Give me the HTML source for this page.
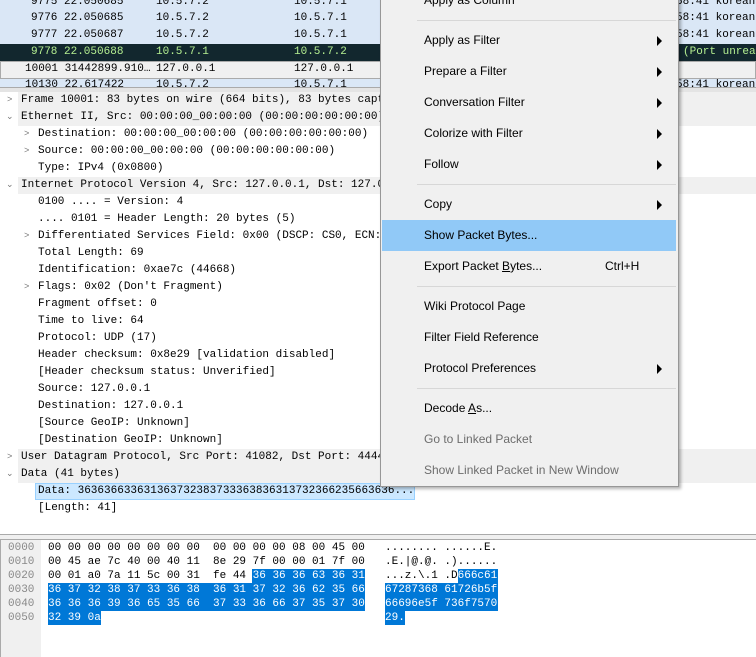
<!DOCTYPE html>
<html><head><meta charset="utf-8"><style>
*{margin:0;padding:0;box-sizing:border-box}
body{width:756px;height:657px;overflow:hidden;background:#fff;position:relative;font-family:"Liberation Mono",monospace;font-size:11px;color:#000}
.a{position:absolute;white-space:pre;line-height:17px}
.row{position:absolute;left:0;width:756px;height:17px}
.m{position:absolute;font-family:"Liberation Sans",sans-serif;font-size:12px;color:#000;left:43px;white-space:pre}
.arr{position:absolute;left:276px;width:0;height:0;border-top:5px solid transparent;border-bottom:5px solid transparent;border-left:5px solid #000}
.sep{position:absolute;left:36px;right:2px;height:1px;background:#d7d7d7}
.h{position:absolute;white-space:pre;line-height:14px;font-size:11px}
.tw{position:absolute;font-size:9px;color:#777;line-height:17px}
</style></head><body>
<!-- packet list -->
<div class="row" style="top:-6px;background:#dae7f6"></div>
<div class="row" style="top:10px;background:#dae7f6"></div>
<div class="row" style="top:27px;background:#dae7f6"></div>
<div class="row" style="top:44px;background:#12272e"></div>
<div class="row" style="top:61px;height:18px;background:#f0f0f0;border:1px solid #aaa"></div>
<div class="row" style="top:79px;height:8px;background:#dae7f6"></div>
<div class="row" style="top:87px;height:5px;background:#e4e4e4;border-top:1px solid #aaa"></div>
<div class="a" style="top:-6px;left:31px">9775 22.050685</div><div class="a" style="top:-6px;left:156px">10.5.7.2</div><div class="a" style="top:-6px;left:294px">10.5.7.1</div><div class="a" style="top:-6px;left:676px">58:41 korean</div>
<div class="a" style="top:10px;left:31px">9776 22.050685</div><div class="a" style="top:10px;left:156px">10.5.7.2</div><div class="a" style="top:10px;left:294px">10.5.7.1</div><div class="a" style="top:10px;left:676px">58:41 korean</div>
<div class="a" style="top:27px;left:31px">9777 22.050687</div><div class="a" style="top:27px;left:156px">10.5.7.2</div><div class="a" style="top:27px;left:294px">10.5.7.1</div><div class="a" style="top:27px;left:676px">58:41 korean</div>
<div class="a" style="top:44px;left:31px;color:#b5ef91">9778 22.050688</div><div class="a" style="top:44px;left:156px;color:#b5ef91">10.5.7.1</div><div class="a" style="top:44px;left:294px;color:#b5ef91">10.5.7.2</div><div class="a" style="top:44px;left:683px;color:#b5ef91">(Port unrea</div>
<div class="a" style="top:61px;left:25px">10001 31442899.910…</div><div class="a" style="top:61px;left:156px">127.0.0.1</div><div class="a" style="top:61px;left:294px">127.0.0.1</div>
<div style="position:absolute;top:79px;left:0;width:756px;height:8px;overflow:hidden"><div class="a" style="top:-2px;left:25px">10130 22.617422</div><div class="a" style="top:-2px;left:156px">10.5.7.2</div><div class="a" style="top:-2px;left:294px">10.5.7.1</div><div class="a" style="top:-2px;left:676px">58:41 korean</div></div>
<!-- tree -->
<div class="row" style="top:92px;background:#f0f0f0;left:18px"></div>
<div class="row" style="top:109px;background:#f0f0f0;left:18px"></div>
<div class="row" style="top:177px;background:#f0f0f0;left:18px"></div>
<div class="row" style="top:449px;background:#f0f0f0;left:18px"></div>
<div class="row" style="top:466px;background:#f0f0f0;left:18px"></div>
<div style="position:absolute;top:483px;left:35px;width:380px;height:17px;background:#cce8ff;border:1px solid #99d1ff"></div>
<div class="tw" style="top:92px;left:7px">&gt;</div>
<div class="tw" style="top:109px;left:6px">⌄</div>
<div class="tw" style="top:126px;left:24px">&gt;</div>
<div class="tw" style="top:143px;left:24px">&gt;</div>
<div class="tw" style="top:177px;left:6px">⌄</div>
<div class="tw" style="top:228px;left:24px">&gt;</div>
<div class="tw" style="top:279px;left:24px">&gt;</div>
<div class="tw" style="top:449px;left:7px">&gt;</div>
<div class="tw" style="top:466px;left:6px">⌄</div>
<div class="a" style="top:92px;left:21px">Frame 10001: 83 bytes on wire (664 bits), 83 bytes capt</div>
<div class="a" style="top:109px;left:21px">Ethernet II, Src: 00:00:00_00:00:00 (00:00:00:00:00:00)</div>
<div class="a" style="top:126px;left:38px">Destination: 00:00:00_00:00:00 (00:00:00:00:00:00)</div>
<div class="a" style="top:143px;left:38px">Source: 00:00:00_00:00:00 (00:00:00:00:00:00)</div>
<div class="a" style="top:160px;left:38px">Type: IPv4 (0x0800)</div>
<div class="a" style="top:177px;left:21px">Internet Protocol Version 4, Src: 127.0.0.1, Dst: 127.0</div>
<div class="a" style="top:194px;left:38px">0100 .... = Version: 4</div>
<div class="a" style="top:211px;left:38px">.... 0101 = Header Length: 20 bytes (5)</div>
<div class="a" style="top:228px;left:38px">Differentiated Services Field: 0x00 (DSCP: CS0, ECN:</div>
<div class="a" style="top:245px;left:38px">Total Length: 69</div>
<div class="a" style="top:262px;left:38px">Identification: 0xae7c (44668)</div>
<div class="a" style="top:279px;left:38px">Flags: 0x02 (Don't Fragment)</div>
<div class="a" style="top:296px;left:38px">Fragment offset: 0</div>
<div class="a" style="top:313px;left:38px">Time to live: 64</div>
<div class="a" style="top:330px;left:38px">Protocol: UDP (17)</div>
<div class="a" style="top:347px;left:38px">Header checksum: 0x8e29 [validation disabled]</div>
<div class="a" style="top:364px;left:38px">[Header checksum status: Unverified]</div>
<div class="a" style="top:381px;left:38px">Source: 127.0.0.1</div>
<div class="a" style="top:398px;left:38px">Destination: 127.0.0.1</div>
<div class="a" style="top:415px;left:38px">[Source GeoIP: Unknown]</div>
<div class="a" style="top:432px;left:38px">[Destination GeoIP: Unknown]</div>
<div class="a" style="top:449px;left:21px">User Datagram Protocol, Src Port: 41082, Dst Port: 4444</div>
<div class="a" style="top:466px;left:21px">Data (41 bytes)</div>
<div class="a" style="top:483px;left:38px">Data: 363636633631363732383733363836313732366235663636...</div>
<div class="a" style="top:500px;left:38px">[Length: 41]</div>
<!-- splitter -->
<div style="position:absolute;top:534px;left:0;width:756px;height:6px;background:#f0f0f0;border-top:1px solid #aaa;border-bottom:1px solid #aaa"></div>
<!-- hex -->
<div style="position:absolute;top:540px;left:0;width:41px;height:117px;background:#f0f0f0"></div>
<div style="position:absolute;top:540px;left:0;width:1px;height:117px;background:#aaa"></div>
<div style="position:absolute;top:569px;left:252px;width:113px;height:14px;background:#0078d7"></div>
<div style="position:absolute;top:583px;left:48px;width:317px;height:28px;background:#0078d7"></div>
<div style="position:absolute;top:611px;left:48px;width:53px;height:14px;background:#0078d7"></div>
<div style="position:absolute;top:569px;left:458px;width:40px;height:14px;background:#0078d7"></div>
<div style="position:absolute;top:583px;left:385px;width:113px;height:28px;background:#0078d7"></div>
<div style="position:absolute;top:611px;left:385px;width:20px;height:14px;background:#0078d7"></div>
<div class="h" style="top:541px;left:8px;color:#888">0000
0010
0020
0030
0040
0050</div>
<div class="h" style="top:541px;left:48px">00 00 00 00 00 00 00 00  00 00 00 00 08 00 45 00
00 45 ae 7c 40 00 40 11  8e 29 7f 00 00 01 7f 00
00 01 a0 7a 11 5c 00 31  fe 44 <span style="color:#fff">36 36 36 63 36 31</span>
<span style="color:#fff">36 37 32 38 37 33 36 38  36 31 37 32 36 62 35 66
36 36 36 39 36 65 35 66  37 33 36 66 37 35 37 30
32 39 0a</span></div>
<div class="h" style="top:541px;left:385px">........ ......E.
.E.|@.@. .)......
...z.\.1 .D<span style="color:#fff">666c61</span>
<span style="color:#fff">67287368 61726b5f
66696e5f 736f7570
29.</span></div>
<!-- context menu -->
<div style="position:absolute;left:380px;top:-10px;width:299px;height:497px;background:#f0f0f0;border:1px solid #979797;box-shadow:2px 2px 3px rgba(0,0,0,.3)">
<div class="m" style="top:2px;color:#000">Apply as Column</div>
<div class="sep" style="top:29px"></div>
<div class="m" style="top:42px">Apply as Filter</div><div class="arr" style="top:45px"></div>
<div class="m" style="top:73px">Prepare a Filter</div><div class="arr" style="top:76px"></div>
<div class="m" style="top:104px">Conversation Filter</div><div class="arr" style="top:107px"></div>
<div class="m" style="top:135px">Colorize with Filter</div><div class="arr" style="top:138px"></div>
<div class="m" style="top:166px">Follow</div><div class="arr" style="top:169px"></div>
<div class="sep" style="top:193px"></div>
<div class="m" style="top:206px">Copy</div><div class="arr" style="top:209px"></div>
<div style="position:absolute;left:1px;top:229px;width:294px;height:31px;background:#91c9f7"></div>
<div class="m" style="top:237px">Show Packet Bytes...</div>
<div class="m" style="top:268px">Export Packet <u>B</u>ytes...</div><div class="m" style="top:268px;left:224px">Ctrl+H</div>
<div class="sep" style="top:295px"></div>
<div class="m" style="top:308px">Wiki Protocol Page</div>
<div class="m" style="top:339px">Filter Field Reference</div>
<div class="m" style="top:370px">Protocol Preferences</div><div class="arr" style="top:373px"></div>
<div class="sep" style="top:397px"></div>
<div class="m" style="top:410px">Decode <u>A</u>s...</div>
<div class="m" style="top:441px;color:#6d6d6d">Go to Linked Packet</div>
<div class="m" style="top:472px;color:#6d6d6d">Show Linked Packet in New Window</div>
</div>
</body></html>
